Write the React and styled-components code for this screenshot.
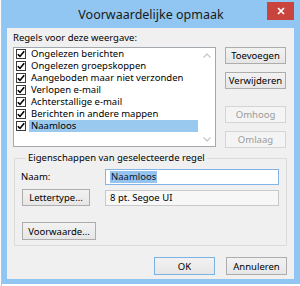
import React from "react";
import styled, { createGlobalStyle, css } from "styled-components";

const Global = createGlobalStyle`
  html, body { margin: 0; padding: 0; }
  body {
    width: 300px;
    height: 286px;
    overflow: hidden;
    background: #ffffff;
    font-family: "Noto Sans", "Open Sans", sans-serif;
    font-size: 9.5px;
    color: #000;
  }
`;

const Page = styled.div`
  display: flex;
  width: 300px;
  height: 286px;
  align-items: flex-start;
`;

const BackStrip = styled.div`
  width: 2px;
  height: 286px;
  background: #fbfbfb;
  border-right: 1px solid #b8c2cb;
`;

const Window = styled.div`
  flex: 1;
  height: 284px;
  background: #90c6f1;
  display: flex;
  flex-direction: column;
  padding: 0 6px 5px 5px;
  box-sizing: border-box;
`;

const TitleBar = styled.div`
  height: 28px;
  display: grid;
  grid-template-columns: 1fr auto 1fr;
  align-items: start;
  margin-left: -5px;
  margin-right: -6px;
`;

const Title = styled.div`
  grid-column: 2;
  font-size: 12.5px;
  line-height: 29px;
  color: #1a1a1a;
  white-space: nowrap;
`;

const CloseButton = styled.div`
  grid-column: 3;
  justify-self: end;
  margin: 2px 6px 0 0;
  width: 27px;
  height: 18px;
  background: #c8443d;
  display: flex;
  align-items: center;
  justify-content: center;
`;

const Client = styled.div`
  height: 251px;
  background: #f0f0f0;
  display: flex;
  flex-direction: column;
  padding: 4px 7px 0 6px;
  box-sizing: border-box;
`;

const Label = styled.div`
  height: 12px;
  line-height: 12px;
  white-space: nowrap;
  margin-left: ${(p) => p.$indent || 0}px;
`;

const TopRow = styled.div`
  display: flex;
  gap: 9px;
  margin-top: 3px;
`;

const ListBox = styled.div`
  width: 203px;
  height: 100px;
  box-sizing: border-box;
  border: 1px solid #a3a8ae;
  background: #fff;
  display: flex;
`;

const Items = styled.div`
  flex: 1;
  display: flex;
  flex-direction: column;
`;

const Row = styled.div`
  height: 12px;
  display: flex;
  align-items: center;
`;

const Check = styled.div`
  width: 10px;
  height: 10px;
  box-sizing: border-box;
  border: 1px solid #3b3b3b;
  background: #fff;
  margin-left: 2px;
  margin-right: 3px;
  display: flex;
  align-items: center;
  justify-content: center;
`;

const ItemText = styled.div`
  flex: 1;
  height: 12px;
  line-height: 12px;
  padding-left: 2px;
  white-space: nowrap;
  overflow: hidden;
  ${(p) =>
    p.$selected &&
    css`
      background: #99c9ef;
    `}
`;

const ScrollBar = styled.div`
  width: 17px;
  display: flex;
  flex-direction: column;
  justify-content: space-between;
  align-items: center;
  padding: 5px 0 4px;
  box-sizing: border-box;
`;

const ButtonColumn = styled.div`
  width: 61px;
  height: 101px;
  display: flex;
  flex-direction: column;
  justify-content: space-between;
`;

const ButtonGroup = styled.div`
  display: flex;
  flex-direction: column;
  gap: 8px;
`;

const Button = styled.div`
  width: ${(p) => p.$w || 61}px;
  height: ${(p) => p.$h || 17}px;
  box-sizing: border-box;
  border: 1px solid ${(p) => (p.$default ? "#7cb2e6" : "#adadad")};
  background: linear-gradient(#f2f2f2, #e6e6e6);
  display: flex;
  align-items: center;
  justify-content: center;
  white-space: nowrap;
  color: #000;
  ${(p) =>
    p.$disabled &&
    css`
      border-color: #d5d5d5;
      background: #f4f4f4;
      color: #9a9a9a;
    `}
`;

const Group = styled.fieldset`
  margin: 4px 0 0 1px;
  width: 273px;
  box-sizing: border-box;
  border: 1px solid #dcdcdc;
  padding: 5px 0 5px 7px;
  display: grid;
  grid-template-columns: 83px 174px;
  grid-template-rows: 16px 17px 30px;
  row-gap: 4px;
  align-items: center;
`;

const Legend = styled.legend`
  padding: 0 2px;
  margin-left: 4px;
  line-height: 12px;
  height: 12px;
  white-space: nowrap;
`;

const Field = styled.div`
  height: ${(p) => p.$h || 16}px;
  box-sizing: border-box;
  border: 1px solid ${(p) => (p.$focused ? "#84b4e4" : "#c9c9c9")};
  background: ${(p) => (p.$focused ? "#fff" : "#f7f7f7")};
  display: flex;
  align-items: center;
  padding-left: 4px;
  white-space: nowrap;
`;

const Selection = styled.span`
  background: #94c3ef;
  color: #0b1730;
  line-height: 12px;
  padding: 0 1px;
`;

const LastRowCell = styled.div`
  align-self: end;
`;

const Footer = styled.div`
  display: flex;
  justify-content: flex-end;
  gap: 11px;
  margin-top: 11px;
`;

const items = [
  "Ongelezen berichten",
  "Ongelezen groepskoppen",
  "Aangeboden maar niet verzonden",
  "Verlopen e-mail",
  "Achterstallige e-mail",
  "Berichten in andere mappen",
  "Naamloos",
];

const CheckMark = () => (
  <svg width="8" height="8" viewBox="0 0 8 8">
    <path d="M0.8 4.2 L3 6.4 L7.2 1.2" fill="none" stroke="#000" strokeWidth="1.6" />
  </svg>
);

const Chevron = ({ up }) => (
  <svg width="8" height="5" viewBox="0 0 8 5">
    <path
      d={up ? "M0.5 4.5 L4 1 L7.5 4.5" : "M0.5 0.5 L4 4 L7.5 0.5"}
      fill="none"
      stroke="#c2c2c2"
      strokeWidth="1.1"
    />
  </svg>
);

export default function App() {
  return (
    <>
      <Global />
      <Page>
        <BackStrip />
        <Window>
          <TitleBar>
            <Title>Voorwaardelijke opmaak</Title>
            <CloseButton>
              <svg width="8" height="8" viewBox="0 0 8 8">
                <path d="M1 1 L7 7 M7 1 L1 7" stroke="#fff" strokeWidth="1.7" />
              </svg>
            </CloseButton>
          </TitleBar>
          <Client>
            <Label>Regels voor deze weergave:</Label>
            <TopRow>
              <ListBox>
                <Items>
                  {items.map((t, i) => (
                    <Row key={t}>
                      <Check>
                        <CheckMark />
                      </Check>
                      <ItemText $selected={i === items.length - 1}>{t}</ItemText>
                    </Row>
                  ))}
                </Items>
                <ScrollBar>
                  <Chevron up />
                  <Chevron />
                </ScrollBar>
              </ListBox>
              <ButtonColumn>
                <ButtonGroup>
                  <Button>Toevoegen</Button>
                  <Button>Verwijderen</Button>
                </ButtonGroup>
                <ButtonGroup>
                  <Button $disabled>Omhoog</Button>
                  <Button $disabled>Omlaag</Button>
                </ButtonGroup>
              </ButtonColumn>
            </TopRow>
            <Group>
              <Legend>Eigenschappen van geselecteerde regel</Legend>
              <Label $indent={-1}>Naam:</Label>
              <Field $focused>
                <Selection>Naamloos</Selection>
              </Field>
              <Button $w={68}>Lettertype...</Button>
              <Field $h={16}>8 pt. Segoe UI</Field>
              <LastRowCell>
                <Button $w={74} $h={18}>Voorwaarde...</Button>
              </LastRowCell>
            </Group>
            <Footer>
              <Button $default $h={18}>OK</Button>
              <Button $h={18}>Annuleren</Button>
            </Footer>
          </Client>
        </Window>
      </Page>
    </>
  );
}
